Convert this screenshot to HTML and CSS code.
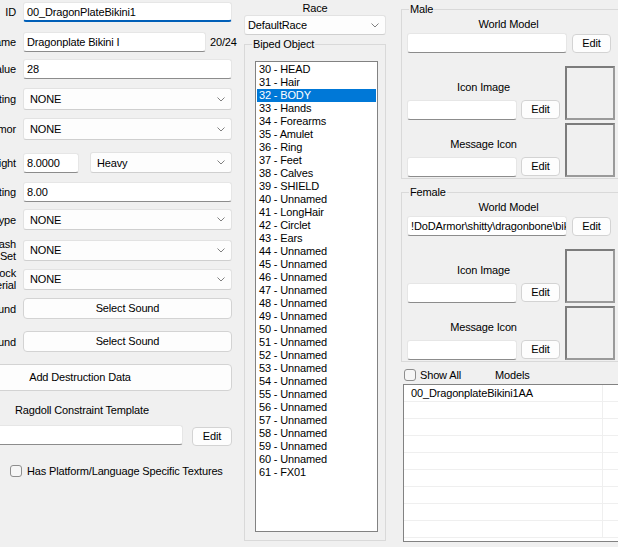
FILE: index.html
```html
<!doctype html>
<html>
<head>
  <meta charset="utf-8">
  <title>Armor</title>
  <link rel="stylesheet" href="styles.css">
</head>
<body>
  <div class="dialog">

    <div class="left">
      <div class="row"><span class="lbl">ID</span><div class="edit focus">00_DragonPlateBikini1</div></div>
      <div class="row"><span class="lbl">Name</span><div class="edit name">Dragonplate Bikini I</div><span class="count">20/24</span></div>
      <div class="row"><span class="lbl">Value</span><div class="edit">28</div></div>
      <div class="row"><span class="lbl">Enchanting</span><div class="combo tall"><span>NONE</span><svg class="chev" width="8" height="5"><polyline points="0.5,0.5 4,4 7.5,0.5"/></svg></div></div>
      <div class="row"><span class="lbl">Template Armor</span><div class="combo tall"><span>NONE</span><svg class="chev" width="8" height="5"><polyline points="0.5,0.5 4,4 7.5,0.5"/></svg></div></div>
      <div class="row"><span class="lbl">Weight</span><div class="edit weight">8.0000</div><div class="combo heavy"><span>Heavy</span><svg class="chev" width="8" height="5"><polyline points="0.5,0.5 4,4 7.5,0.5"/></svg></div></div>
      <div class="row"><span class="lbl">Armor Rating</span><div class="edit">8.00</div></div>
      <div class="row"><span class="lbl">Equip Type</span><div class="combo"><span>NONE</span><svg class="chev" width="8" height="5"><polyline points="0.5,0.5 4,4 7.5,0.5"/></svg></div></div>
      <div class="row"><span class="lbl">Bash<br>Impact Data Set</span><div class="combo"><span>NONE</span><svg class="chev" width="8" height="5"><polyline points="0.5,0.5 4,4 7.5,0.5"/></svg></div></div>
      <div class="row"><span class="lbl">Alternate Block<br>Material</span><div class="combo"><span>NONE</span><svg class="chev" width="8" height="5"><polyline points="0.5,0.5 4,4 7.5,0.5"/></svg></div></div>
      <div class="row"><span class="lbl">Pickup Sound</span><div class="btn wide">Select Sound</div></div>
      <div class="row"><span class="lbl">Putdown Sound</span><div class="btn wide">Select Sound</div></div>
      <div class="btn destruct">Add Destruction Data</div>
      <div class="ragdoll-cap">Ragdoll Constraint Template</div>
      <div class="ragdoll-row"><div class="edit"></div><div class="btn small">Edit</div></div>
      <div class="check-row"><span class="check"></span>Has Platform/Language Specific Textures</div>
    </div>

    <div class="mid">
      <div class="cap">Race</div>
      <div class="combo race"><span>DefaultRace</span><svg class="chev" width="8" height="5"><polyline points="0.5,0.5 4,4 7.5,0.5"/></svg></div>
      <fieldset class="group biped">
        <legend>Biped Object</legend>
        <div class="listbox" id="biped"></div>
      </fieldset>
    </div>

    <div class="right">
      <fieldset class="group side">
        <legend>Male</legend>
        <div class="wm-cap">World Model</div>
        <div class="wm-row"><div class="edit path"></div><div class="btn small">Edit</div></div>
        <div class="icons">
          <div class="slots">
            <div class="slot"><div class="cap">Icon Image</div><div class="slot-row"><div class="edit"></div><div class="btn small">Edit</div></div></div>
            <div class="slot"><div class="cap">Message Icon</div><div class="slot-row"><div class="edit"></div><div class="btn small">Edit</div></div></div>
          </div>
          <div class="boxes"><div class="pic"></div><div class="pic"></div></div>
        </div>
      </fieldset>
      <fieldset class="group side">
        <legend>Female</legend>
        <div class="wm-cap">World Model</div>
        <div class="wm-row"><div class="edit path">!DoDArmor\shitty\dragonbone\bikini</div><div class="btn small">Edit</div></div>
        <div class="icons">
          <div class="slots">
            <div class="slot"><div class="cap">Icon Image</div><div class="slot-row"><div class="edit"></div><div class="btn small">Edit</div></div></div>
            <div class="slot"><div class="cap">Message Icon</div><div class="slot-row"><div class="edit"></div><div class="btn small">Edit</div></div></div>
          </div>
          <div class="boxes"><div class="pic"></div><div class="pic"></div></div>
        </div>
      </fieldset>
      <div class="show-row"><span class="check"></span><span class="show">Show All</span><span class="models">Models</span></div>
      <div class="listview">
        <table>
          <tr><td>00_DragonplateBikini1AA</td><td></td></tr>
          <tr><td></td><td></td></tr>
          <tr><td></td><td></td></tr>
          <tr><td></td><td></td></tr>
          <tr><td></td><td></td></tr>
          <tr><td></td><td></td></tr>
          <tr><td></td><td></td></tr>
          <tr><td></td><td></td></tr>
          <tr><td></td><td></td></tr>
        </table>
      </div>
    </div>

  </div>

  <script>
    const parts = ["HEAD", "Hair", "BODY", "Hands", "Forearms", "Amulet", "Ring", "Feet", "Calves", "SHIELD",
      "Unnamed", "LongHair", "Circlet", "Ears"];
    const list = document.getElementById("biped");
    for (let i = 30; i <= 61; i++) {
      let name = parts[i - 30] || "Unnamed";
      if (i == 61) name = "FX01";
      const item = document.createElement("div");
      item.className = "item" + (i == 32 ? " sel" : "");
      item.textContent = i + " - " + name;
      list.appendChild(item);
    }
  </script>
</body>
</html>
```

FILE: styles.css
```css
body {
  margin: 0;
  width: 618px;
  height: 547px;
  overflow: hidden;
  background: #f0f0f0;
  font-family: "Liberation Sans", Arial, sans-serif;
  font-size: 11px;
  letter-spacing: -0.15px;
  color: #000;
}
.dialog {
  display: flex;
  align-items: flex-start;
}

/* left column */
.left {
  flex: none;
  width: 304px;
  margin-left: -72px;
  padding-top: 2px;
  display: grid;
  grid-template-columns: minmax(0, 1fr);
  grid-template-rows: 30px 27px 29px 30px 34px 30px 27px 29px 29px 31px 33px 33px 38px 23px 40px auto;
  align-items: start;
}
.row {
  display: flex;
  align-items: center;
}
.lbl {
  flex: none;
  width: 88px;
  margin-right: 7px;
  text-align: right;
  white-space: nowrap;
  line-height: 12px;
}
.edit {
  flex: 1;
  min-width: 0;
  height: 20px;
  box-sizing: border-box;
  padding: 0 3px;
  background: #fff;
  border: 1px solid #e6e6e6;
  border-bottom-color: #8c8c8c;
  border-radius: 3px;
  line-height: 18px;
  white-space: nowrap;
  overflow: hidden;
}
.edit.focus {
  border-bottom: 2px solid #005fb8;
}
.edit.name {
  flex: none;
  width: 183px;
}
.count {
  flex: none;
  margin-left: 4px;
  white-space: nowrap;
}
.edit.weight {
  flex: none;
  width: 56px;
}
.combo {
  flex: 1;
  height: 21px;
  box-sizing: border-box;
  display: flex;
  align-items: center;
  justify-content: space-between;
  padding: 0 6px;
  background: #fdfdfd;
  border: 1px solid #e2e2e2;
  border-bottom-color: #cfcfcf;
  border-radius: 3px;
}
.combo.tall {
  height: 22px;
}
.combo.heavy {
  margin-left: 11px;
}
.chev {
  fill: none;
  stroke: #808080;
  stroke-width: 1;
}
.btn {
  height: 21px;
  box-sizing: border-box;
  background: #fdfdfd;
  border: 1px solid #d3d3d3;
  border-radius: 4px;
  text-align: center;
  line-height: 19px;
}
.btn.wide {
  flex: 1;
}
.btn.small {
  flex: none;
  width: 39px;
  height: 19px;
  line-height: 17px;
}
.btn.destruct {
  height: 27px;
  line-height: 25px;
}
.ragdoll-cap {
  padding-left: 87px;
  line-height: 16px;
}
.ragdoll-row {
  display: flex;
}
.ragdoll-row .btn {
  width: 40px;
  margin: 2px 0 0 9px;
}
.check-row {
  display: flex;
  align-items: center;
  padding-left: 82px;
  line-height: 12px;
  white-space: nowrap;
}
.check {
  flex: none;
  width: 12px;
  height: 12px;
  box-sizing: border-box;
  margin-right: 5px;
  background: #f6f6f6;
  border: 1px solid #8e8e8e;
  border-radius: 3px;
}

/* middle column */
.mid {
  flex: none;
  width: 142px;
  margin-left: 12px;
  padding-top: 2px;
}
.cap {
  text-align: center;
  line-height: 13px;
}
.combo.race {
  height: 20px;
  padding-left: 3px;
}
.group {
  margin: 2px 0 0;
  padding: 0;
  box-sizing: border-box;
  border: 1px solid #d9d9d9;
}
.group legend {
  margin-left: 7px;
  padding: 0 1px;
  line-height: 14px;
}
.biped {
  height: 504px;
}
.listbox {
  width: 123px;
  height: 471px;
  box-sizing: border-box;
  margin: 10px 0 0 10px;
  padding: 1px 0;
  background: #fff;
  border: 1px solid #828282;
}
.item {
  margin: 0 1px;
  padding-left: 2px;
  line-height: 13px;
  white-space: nowrap;
}
.item.sel {
  background: #0078d7;
  color: #fff;
}

/* right column */
.right {
  flex: none;
  width: 240px;
  margin-left: 15px;
  padding-top: 2px;
}
.side {
  height: 177px;
  margin-top: 0;
}
.side + .side {
  margin-top: 6px;
}
.wm-cap {
  width: 203px;
  margin: 1px 0 0 5px;
  text-align: center;
  line-height: 14px;
}
.wm-row {
  display: flex;
  width: 203px;
  margin: 2px 0 0 5px;
}
.edit.path {
  flex: none;
  width: 160px;
}
.wm-row .btn {
  margin: 1px 0 0 5px;
}
.icons {
  display: flex;
  margin: 13px 0 0 5px;
}
.slots {
  width: 153px;
}
.slot {
  height: 54px;
  display: flex;
  flex-direction: column;
  justify-content: flex-end;
}
.slot + .slot {
  margin-top: 3px;
}
.slot .cap {
  line-height: 14px;
  margin-bottom: 6px;
}
.slot-row {
  display: flex;
}
.slot-row .edit {
  flex: none;
  width: 110px;
}
.slot-row .btn {
  margin-left: 4px;
}
.boxes {
  margin-left: 5px;
}
.pic {
  width: 50px;
  height: 54px;
  box-sizing: border-box;
  border: 2px solid #7c7c7c;
  border-right-color: #9a9a9a;
  border-bottom-color: #9a9a9a;
}
.pic + .pic {
  margin-top: 3px;
}
.show-row {
  display: flex;
  align-items: center;
  height: 12px;
  margin: 7px 0 0 3px;
}
.show-row .check {
  margin-right: 4px;
}
.models {
  margin-left: 34px;
}
.listview {
  width: 238px;
  height: 158px;
  box-sizing: border-box;
  margin: 3px 0 0 2px;
  background: #fff;
  border: 1px solid #828282;
  overflow: hidden;
}
table {
  border-collapse: collapse;
  width: 100%;
}
td {
  height: 16px;
  padding: 0 0 0 7px;
  border-bottom: 1px solid #efefef;
  line-height: 16px;
  white-space: nowrap;
}
td:first-child {
  width: 191px;
  border-right: 1px solid #efefef;
}
```
